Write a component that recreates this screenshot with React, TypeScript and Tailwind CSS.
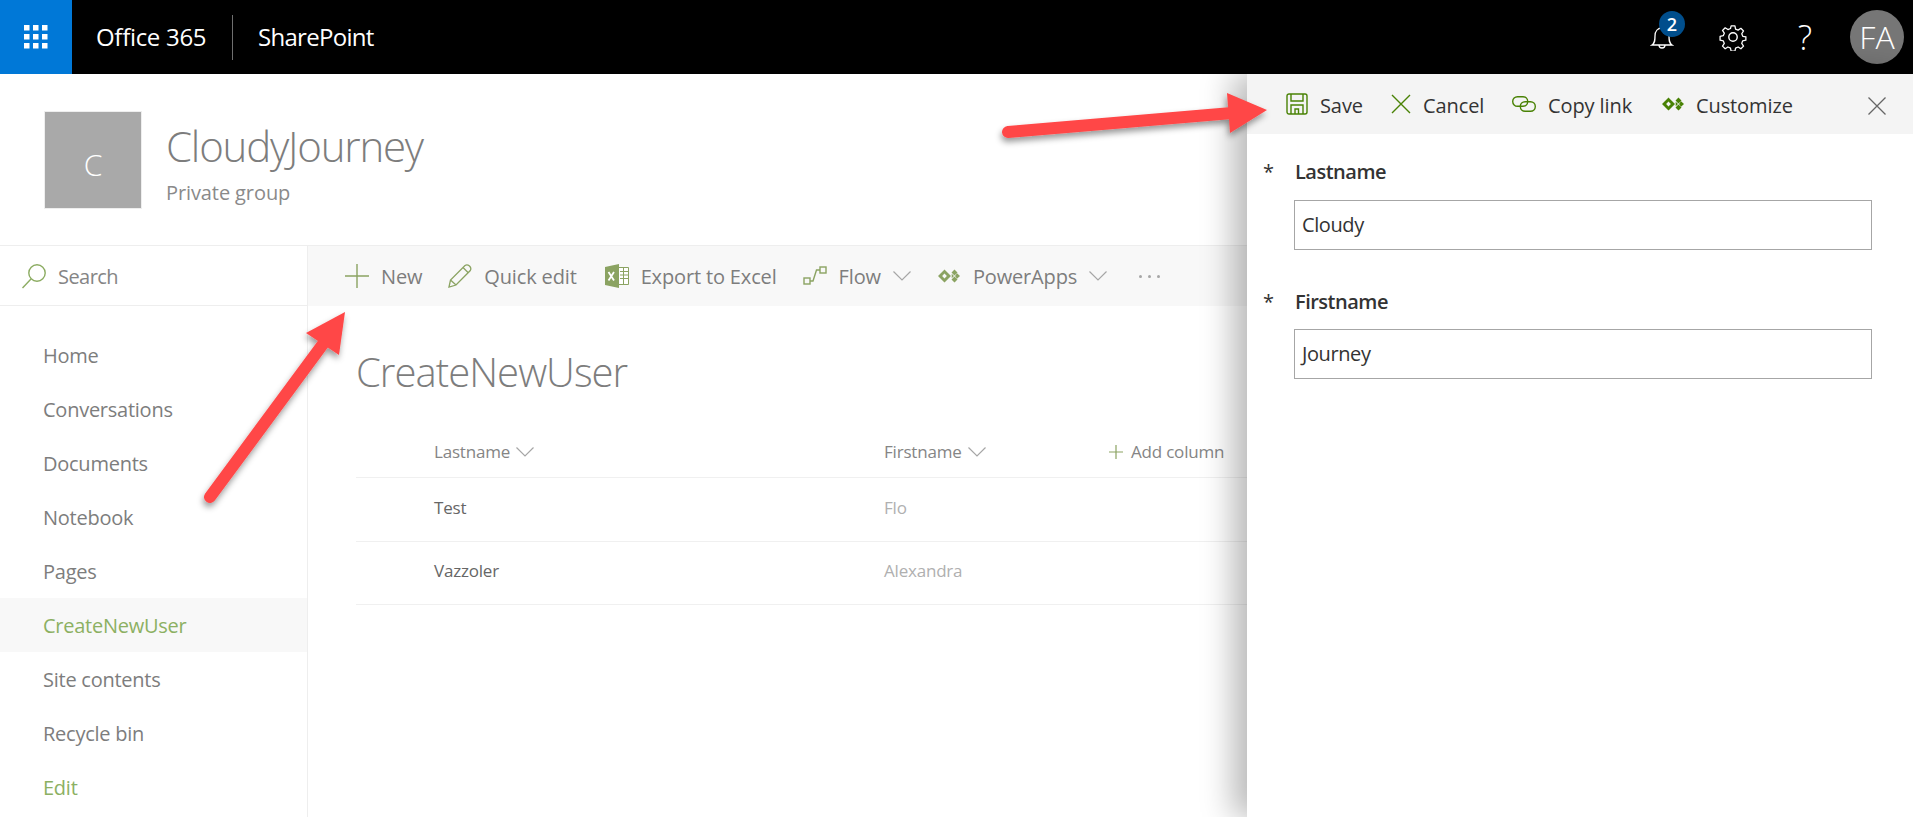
import React from "react";

const sans = "font-['Open_Sans',sans-serif]";

function Chevron({ className = "" }: { className?: string }) {
  return (
    <svg width="18" height="10" viewBox="0 0 18 10" className={className} fill="none" stroke="#a6a6a6" strokeWidth="1.2">
      <path d="M0.5 0.5 L9 9 L17.5 0.5" />
    </svg>
  );
}

function Diamonds({ color, className = "" }: { color: string; className?: string }) {
  return (
    <svg width="22" height="14" viewBox="0 0 22 14" className={className}>
      <path d="M6.5 0.5 L13 7 L6.5 13.5 L0 7 Z M6.5 4.6 L4.1 7 L6.5 9.4 L8.9 7 Z" fill={color} fillRule="evenodd" />
      <path d="M16.5 0.5 L19.5 3.5 L16.5 6.5 L13.5 3.5 Z M16.5 7.5 L19.5 10.5 L16.5 13.5 L13.5 10.5 Z M19 4.2 L22 7 L19 9.8 L17 7 Z M13.7 4.7 L16 7 L13.7 9.3 Z" fill={color} />
    </svg>
  );
}

function Cmd({ icon, label, ml, chevron }: { icon: React.ReactNode; label: string; ml: string; chevron?: boolean }) {
  return (
    <div className={`flex items-center ${ml}`}>
      <span className="flex w-[24px] justify-center">{icon}</span>
      <span className="ml-[12px] pt-[2px] text-[20px] tracking-[-0.15px] text-[#7d7d7d]">{label}</span>
      {chevron && <Chevron className="ml-[12px]" />}
    </div>
  );
}

function PanelCmd({ icon, label, w }: { icon: React.ReactNode; label: string; w: string }) {
  return (
    <div className={`flex items-center ${w}`}>
      {icon}
      <span className="ml-[12px] pt-[4px] text-[20px] tracking-[-0.1px] text-[#333333]">{label}</span>
    </div>
  );
}

function Field({ label, value, mt, gap }: { label: string; value: string; mt: string; gap: string }) {
  return (
    <div className={mt}>
      <div className="flex h-[26px] items-center">
        <span className="w-[26px] pl-[16px] text-[20px] leading-none text-[#333333]">*</span>
        <span className="ml-[22px] text-[20px] font-semibold tracking-[-0.5px] text-[#333333]">{label}</span>
      </div>
      <div className={`ml-[47px] mr-[41px] flex h-[50px] items-center border border-[#a6a6a6] pl-[7px] text-[20px] tracking-[-0.4px] text-[#333333] ${gap}`}>
        {value}
      </div>
    </div>
  );
}

const nav = ["Home", "Conversations", "Documents", "Notebook", "Pages", "CreateNewUser", "Site contents", "Recycle bin", "Edit"];

export default function App() {
  return (
    <div className={`relative h-[817px] w-[1913px] overflow-hidden bg-white ${sans}`}>
      {/* Suite bar */}
      <header className="flex h-[74px] items-center bg-black text-white">
        <div className="flex h-[74px] w-[72px] items-center justify-center bg-[#0078d7]">
          <svg width="24" height="24" viewBox="0 0 24 24" fill="#fff">
            {[0, 9, 18].flatMap((y) =>
              [0, 9, 18].map((x) => <rect key={`${x}-${y}`} x={x} y={y} width="5.5" height="5.5" />),
            )}
          </svg>
        </div>
        <span className="ml-[24px] w-[136px] text-[24px] tracking-[-0.3px]">Office 365</span>
        <div className="h-[45px] w-px bg-[#6f6f6f]" />
        <span className="ml-[25px] text-[24px] tracking-[-0.7px]">SharePoint</span>
        <div className="ml-auto flex items-center">
          <div className="relative mr-[45px]">
            <svg width="24" height="24" viewBox="0 0 24 24" fill="none" stroke="#fff" strokeWidth="1.3">
              <path d="M2 20 C5 18 5 15 5 11 C5 6 8 3 12 3 C16 3 19 6 19 11 C19 15 19 18 22 20 Z" />
              <path d="M9 20 C9 24 15 24 15 20" />
            </svg>
            <span className="absolute left-[9px] top-[-14px] flex h-[26px] w-[26px] items-center justify-center rounded-full bg-[#004e8c] text-[18px] font-semibold leading-none">
              2
            </span>
          </div>
          <svg width="28" height="28" viewBox="0 0 24 24" fill="none" stroke="#fff" strokeWidth="1.2" strokeLinejoin="round" className="mr-[50px]">
            <circle cx="12" cy="12" r="3.6" />
            <path d="M10.2 1.5h3.6l.6 3 2.4 1 2.6-1.7 2.5 2.5-1.7 2.6 1 2.4 3 .6v0l-.1 0v3.1l-3 .6-.9 2.4 1.7 2.6-2.5 2.5-2.6-1.7-2.4 1-.6 3h-3.6l-.6-3-2.4-1-2.6 1.7-2.5-2.5 1.7-2.6-1-2.4-3-.6v-3.6l3-.6 1-2.4-1.7-2.6 2.5-2.5 2.6 1.7 2.4-1z" transform="translate(1.1 1.1) scale(.91)" />
          </svg>
          <span className="mr-[37px] w-[16px] text-center text-[34px] font-light leading-none">?</span>
          <div className="mr-[9px] flex h-[54px] w-[54px] items-center justify-center rounded-full bg-[#767676] text-[32px] font-light">
            FA
          </div>
        </div>
      </header>

      {/* Site header */}
      <div className="flex h-[172px] border-b border-[#eeeeee] pl-[44px] pt-[37px]">
        <div className="flex h-[98px] w-[98px] items-center justify-center border border-[#eeeeee] bg-[#a9a9a9] pt-[8px] text-[30px] font-light text-white">
          C
        </div>
        <div className="ml-[24px]">
          <div className="mt-[10px] text-[42px] font-light leading-[50px] tracking-[-1.2px] text-[#7d7d7d]">CloudyJourney</div>
          <div className="mt-[8px] text-[20px] leading-[28px] tracking-[-0.1px] text-[#8a8a8a]">Private group</div>
        </div>
      </div>

      <div className="flex h-[571px]">
        {/* Left navigation */}
        <aside className="w-[308px] shrink-0 border-r border-[#eeeeee]">
          <div className="flex h-[60px] items-center border-b border-[#eeeeee] pl-[21px]">
            <svg width="26" height="26" viewBox="0 0 26 26" fill="none" stroke="#8cac62" strokeWidth="1.4">
              <circle cx="16" cy="10" r="8.2" />
              <path d="M10 16 L1.5 25" />
            </svg>
            <span className="ml-[11px] pt-[2px] text-[20px] tracking-[-0.55px] text-[#858585]">Search</span>
          </div>
          <nav className="pt-[22px]">
            {nav.map((n) => (
              <div
                key={n}
                className={`flex h-[54px] items-center pl-[43px] pt-[2px] text-[20px] tracking-[-0.25px] ${
                  n === "CreateNewUser" ? "bg-[#f8f8f8] text-[#8cb062]" : n === "Edit" ? "text-[#8cb062]" : "text-[#7d7d7d]"
                }`}
              >
                {n}
              </div>
            ))}
          </nav>
        </aside>

        {/* Main */}
        <main className="min-w-0 flex-1">
          <div className="flex h-[60px] items-center bg-[#f8f8f8] pl-[37px]">
            <Cmd
              ml=""
              label="New"
              icon={
                <svg width="24" height="24" viewBox="0 0 24 24" stroke="#8ba362" strokeWidth="1.4">
                  <path d="M0 12 H24 M12 0 V24" />
                </svg>
              }
            />
            <Cmd
              ml="ml-[26px]"
              label="Quick edit"
              icon={
                <svg width="24" height="24" viewBox="0 0 24 24" fill="none" stroke="#8ba362" strokeWidth="1.3">
                  <path d="M1 23 L2.5 16 L17 1.5 C18.5 0.5 20 0.8 21.5 2 C23 3.5 23.2 5 22.3 6.5 L8 21 Z M2.5 16 L8 21 M15 3.5 L20.5 9" />
                </svg>
              }
            />
            <Cmd
              ml="ml-[28px]"
              label="Export to Excel"
              icon={
                <svg width="24" height="24" viewBox="0 0 24 24">
                  <path d="M0 3 L14 0 V24 L0 21 Z" fill="#8ba362" />
                  <path d="M14 3.5 H23.5 V20.5 H14" fill="#fff" stroke="#8ba362" strokeWidth="1" />
                  <path d="M15 7.5 H23 M15 11 H23 M15 14.5 H23 M18.5 4 V20" stroke="#8ba362" strokeWidth="1" />
                  <path d="M3.5 8 L9 16.5 M9 8 L3.5 16.5" stroke="#fff" strokeWidth="1.8" />
                </svg>
              }
            />
            <Cmd
              ml="ml-[26px]"
              label="Flow"
              chevron
              icon={
                <svg width="24" height="20" viewBox="0 0 24 20" fill="none" stroke="#8ba362" strokeWidth="1.4">
                  <rect x="1" y="12" width="6" height="6" />
                  <rect x="17" y="1" width="6" height="6" />
                  <path d="M7 15 H10 L13.5 4 H17" />
                </svg>
              }
            />
            <Cmd ml="ml-[26px]" label="PowerApps" chevron icon={<Diamonds color="#8ba362" />} />
            <div className="ml-[32px] flex gap-[6px]">
              <span className="h-[3px] w-[3px] rounded-full bg-[#a6a6a6]" />
              <span className="h-[3px] w-[3px] rounded-full bg-[#a6a6a6]" />
              <span className="h-[3px] w-[3px] rounded-full bg-[#a6a6a6]" />
            </div>
          </div>

          <div className="pl-[48px]">
            <h1 className="mt-[39px] text-[40px] font-light leading-[54px] tracking-[-0.95px] text-[#7d7d7d]">CreateNewUser</h1>
            <div className="mt-[27px]">
              <div className="flex h-[52px] items-center border-b border-[#f0f0f0] text-[17px] tracking-[-0.2px] text-[#858585]">
                <div className="flex w-[528px] items-center pl-[78px]">
                  Lastname <Chevron className="ml-[6px]" />
                </div>
                <div className="flex w-[225px] items-center">
                  Firstname <Chevron className="ml-[6px]" />
                </div>
                <div className="flex items-center">
                  <svg width="14" height="14" viewBox="0 0 14 14" stroke="#8ba362" strokeWidth="1.2">
                    <path d="M0 7 H14 M7 0 V14" />
                  </svg>
                  <span className="ml-[8px]">Add column</span>
                </div>
              </div>
              {[
                ["Test", "Flo"],
                ["Vazzoler", "Alexandra"],
              ].map(([a, b]) => (
                <div key={a} className="flex h-[63.5px] items-center border-b border-[#f0f0f0] pb-[4px] text-[17px] tracking-[-0.2px]">
                  <div className="w-[528px] pl-[78px] text-[#666666]">{a}</div>
                  <div className="text-[#b0b0b0]">{b}</div>
                </div>
              ))}
            </div>
          </div>
        </main>
      </div>

      {/* Edit panel overlay */}
      <section className="absolute bottom-0 left-[1247px] right-0 top-[74px] bg-white shadow-[-14px_0_30px_rgba(0,0,0,0.28)]">
        <div className="flex h-[60px] items-center bg-[#f4f4f4] pl-[39px]">
          <PanelCmd
            w="w-[105px]"
            label="Save"
            icon={
              <svg width="22" height="22" viewBox="0 0 22 22" fill="none" stroke="#498205" strokeWidth="1.4">
                <path d="M1 3 A2 2 0 0 1 3 1 H19 A2 2 0 0 1 21 3 V19 A2 2 0 0 1 19 21 H3 A2 2 0 0 1 1 19 Z" />
                <path d="M5 1 V8 H17 V1 M5 21 V12 H17 V21 M9 21 V16 H12.5 V21" />
              </svg>
            }
          />
          <PanelCmd
            w="w-[121px]"
            label="Cancel"
            icon={
              <svg width="20" height="20" viewBox="0 0 20 20" stroke="#498205" strokeWidth="1.4">
                <path d="M1 1 L19 19 M19 1 L1 19" />
              </svg>
            }
          />
          <PanelCmd
            w="w-[150px]"
            label="Copy link"
            icon={
              <svg width="24" height="16" viewBox="0 0 24 16" fill="none" stroke="#498205" strokeWidth="1.4">
                <rect x="0.7" y="0.7" width="15" height="9.6" rx="4.8" />
                <rect x="8.3" y="5.7" width="15" height="9.6" rx="4.8" />
              </svg>
            }
          />
          <PanelCmd w="w-[206px]" label="Customize" icon={<Diamonds color="#498205" />} />
          <svg width="18" height="18" viewBox="0 0 18 18" stroke="#666666" strokeWidth="1.3" className="mt-[4px]">
            <path d="M0.5 0.5 L17.5 17.5 M17.5 0.5 L0.5 17.5" />
          </svg>
        </div>
        <Field label="Lastname" value="Cloudy" mt="mt-[25px]" gap="mt-[15px]" />
        <Field label="Firstname" value="Journey" mt="mt-[39px]" gap="mt-[14px]" />
      </section>

      {/* Annotation arrows */}
      <svg className="pointer-events-none absolute inset-0" width="1913" height="817" viewBox="0 0 1913 817">
        <defs>
          <filter id="arrowShadow" x="-20%" y="-40%" width="140%" height="200%">
            <feDropShadow dx="-1" dy="4" stdDeviation="3" floodColor="#000" floodOpacity="0.4" />
          </filter>
        </defs>
        <g filter="url(#arrowShadow)" fill="#ff4747">
          <path d="M210 497 L323 344" stroke="#ff4747" strokeWidth="12" strokeLinecap="round" />
          <path d="M345 312 L339 355 L306 333 Z" />
          <path d="M1008 132 L1232 113" stroke="#ff4747" strokeWidth="12" strokeLinecap="round" />
          <path d="M1267 110 L1230 133 L1227 93 Z" />
        </g>
      </svg>
    </div>
  );
}
